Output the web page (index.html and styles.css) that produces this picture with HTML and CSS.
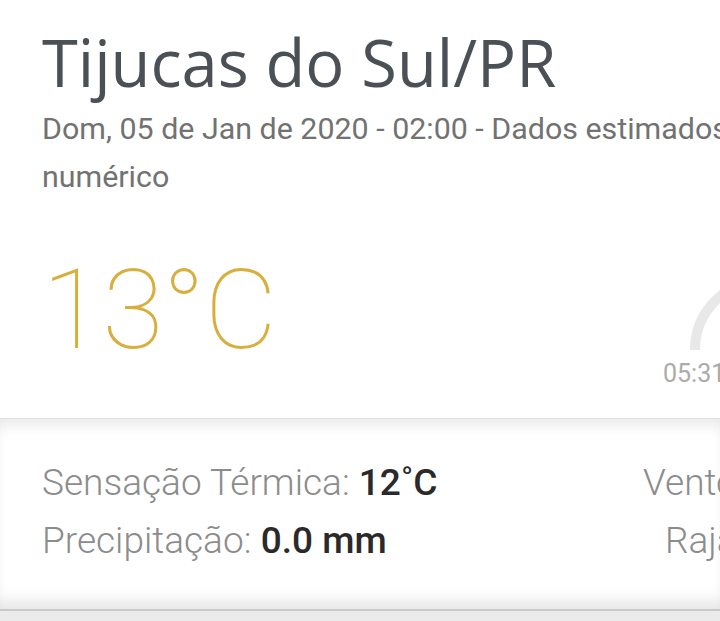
FILE: index.html
```html
<!DOCTYPE html>
<html lang="pt-BR">
<head>
<meta charset="utf-8">
<title>Tijucas do Sul/PR</title>
<link rel="stylesheet" href="styles.css">
</head>
<body>
<main class="page">
  <section class="card-top">
    <h1 class="city">Tijucas do Sul/PR</h1>
    <p class="meta">Dom, 05 de Jan de 2020 - 02:00 - Dados estimados<br>numérico</p>
    <div class="hero">
      <div class="temp">13°C</div>
      <div class="sun">
        <svg class="sun-arc" width="150" height="90" viewBox="0 0 150 90" aria-hidden="true">
          <path d="M40 88 A70 70 0 0 1 180 88" fill="none" stroke="#e8e8e8" stroke-width="10"/>
        </svg>
        <div class="sun-time">05:31</div>
      </div>
    </div>
  </section>
  <section class="card-details">
    <div class="col-left">
      <div class="row"><span class="label">Sensação Térmica:</span> <span class="value">12˚C</span></div>
      <div class="row"><span class="label">Precipitação:</span> <span class="value">0.0 mm</span></div>
    </div>
    <div class="col-right">
      <div class="row"><span class="label">Vento</span></div>
      <div class="row row-indent"><span class="label">Rajada</span></div>
    </div>
  </section>
  <div class="below"></div>
</main>
</body>
</html>
```

FILE: styles.css
```css
html, body {
  margin: 0;
  padding: 0;
  overflow: hidden;
  background: #ececec;
}

.page {
  width: 720px;
  height: 621px;
  overflow: hidden;
  display: flex;
  flex-direction: column;
  background: #ececec;
}

.card-top {
  background: #ffffff;
  padding: 22px 0 0 42px;
  height: 396px;
  flex-shrink: 0;
}

.city {
  margin: 0;
  font-family: "Open Sans", "Liberation Sans", sans-serif;
  font-weight: 400;
  font-size: 65px;
  line-height: 80px;
  color: #4b5056;
  white-space: nowrap;
}

.meta {
  margin: 3px 0 0 0;
  font-family: Roboto, "Liberation Sans", sans-serif;
  font-size: 30.4px;
  line-height: 48px;
  color: #727272;
  white-space: nowrap;
}

.hero {
  display: flex;
  align-items: flex-start;
  margin-top: 52px;
}

.temp {
  width: 613px;
  flex-shrink: 0;
  font-family: Roboto, "Liberation Sans", sans-serif;
  font-weight: 100;
  font-size: 112px;
  line-height: 114px;
  color: #d8ae3c;
  letter-spacing: -1px;
}

.sun {
  flex-shrink: 0;
  margin-top: 9px;
  width: 150px;
}

.sun-arc {
  display: block;
}

.sun-time {
  margin: 7px 0 0 8px;
  font-family: Roboto, "Liberation Sans", sans-serif;
  font-size: 25px;
  line-height: 30px;
  color: #ababab;
}

.card-details {
  flex-shrink: 0;
  height: 193px;
  box-sizing: border-box;
  background: #ffffff;
  border-top: 1px solid #e2e2e2;
  border-bottom: 2px solid #c9c9c9;
  box-shadow: inset 0 14px 14px -8px rgba(0, 0, 0, 0.09), inset 0 -16px 16px -8px rgba(0, 0, 0, 0.1);
  display: flex;
  padding: 35px 0 0 42px;
  white-space: nowrap;
}

.col-left {
  width: 601px;
  flex-shrink: 0;
}

.col-right {
  flex-shrink: 0;
}

.row {
  font-family: Roboto, "Liberation Sans", sans-serif;
  font-size: 37px;
  line-height: 58px;
}

.row-indent {
  padding-left: 22px;
}

.label {
  font-weight: 300;
  color: #8c8c8c;
}

.value {
  font-weight: 500;
  color: #2a2a2a;
}

.below {
  flex: 1;
  background: #ebebeb;
}
```
